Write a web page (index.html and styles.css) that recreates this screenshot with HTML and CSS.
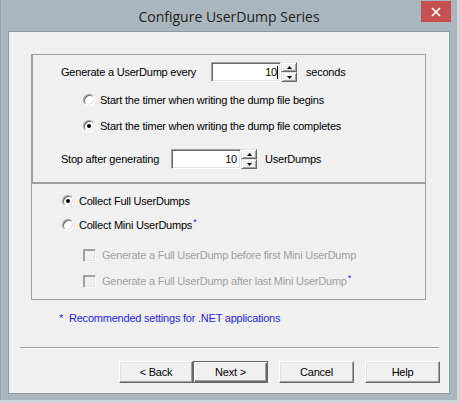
FILE: index.html
```html
<!DOCTYPE html>
<html>
<head>
<meta charset="utf-8">
<title>Configure UserDump Series</title>
<link rel="stylesheet" href="styles.css">
</head>
<body>
<div class="window">
  <div class="titlebar">
    <span class="title">Configure UserDump Series</span>
    <div class="close">
      <svg width="10" height="10" viewBox="0 0 10 10"><path d="M1 1L9 9M9 1L1 9" stroke="#fff" stroke-width="1.7" fill="none"/></svg>
    </div>
  </div>
  <div class="client">
    <div class="group g1">
      <div class="spinrow first">
        <span class="label l-every">Generate a UserDump every</span>
        <div class="spin">
          <div class="field">10<span class="caret"></span></div>
          <div class="arrows">
            <div class="arr"><svg width="5" height="3" viewBox="0 0 5 3"><path d="M2.5 0L5 3H0Z" fill="#000"/></svg></div>
            <div class="arr"><svg width="5" height="3" viewBox="0 0 5 3"><path d="M0 0H5L2.5 3Z" fill="#000"/></svg></div>
          </div>
        </div>
        <span class="unit">seconds</span>
      </div>
      <div class="opt indent r1"><span class="radio"></span><span class="txt">Start the timer when writing the dump file begins</span></div>
      <div class="opt indent r2"><span class="radio on"></span><span class="txt">Start the timer when writing the dump file completes</span></div>
      <div class="spinrow last">
        <span class="label l-stop">Stop after generating</span>
        <div class="spin">
          <div class="field">10</div>
          <div class="arrows">
            <div class="arr"><svg width="5" height="3" viewBox="0 0 5 3"><path d="M2.5 0L5 3H0Z" fill="#000"/></svg></div>
            <div class="arr"><svg width="5" height="3" viewBox="0 0 5 3"><path d="M0 0H5L2.5 3Z" fill="#000"/></svg></div>
          </div>
        </div>
        <span class="unit">UserDumps</span>
      </div>
    </div>
    <div class="group g2">
      <div class="opt outdent c1"><span class="radio on"></span><span class="txt">Collect Full UserDumps</span></div>
      <div class="opt outdent c2"><span class="radio"></span><span class="txt">Collect Mini UserDumps<sup class="star">*</sup></span></div>
      <div class="opt cindent k1"><span class="check"></span><span class="txt dis">Generate a Full UserDump before first Mini UserDump</span></div>
      <div class="opt cindent k2"><span class="check"></span><span class="txt dis">Generate a Full UserDump after last Mini UserDump<sup class="star">*</sup></span></div>
    </div>
    <div class="note"><span class="nstar">*</span><span>Recommended settings for .NET applications</span></div>
    <div class="sep"></div>
    <div class="buttons">
      <button class="btn back">&lt; Back</button>
      <button class="btn next">Next &gt;</button>
      <button class="btn cancel">Cancel</button>
      <button class="btn help">Help</button>
    </div>
  </div>
</div>
</body>
</html>
```
FILE: styles.css
```css
html, body {
  margin: 0;
  padding: 0;
}
body {
  width: 460px;
  height: 403px;
  background: #cfd5d9;
  font-family: "Liberation Sans", Arial, sans-serif;
  font-size: 11px;
  letter-spacing: -0.22px;
  color: #000;
  overflow: hidden;
}
.window {
  width: 457px;
  height: 400px;
  box-sizing: border-box;
  background: #aab6bd;
  border-left: 1px solid #93a0a8;
  display: flex;
  flex-direction: column;
  position: relative;
}
.titlebar {
  height: 31px;
  flex: none;
  display: flex;
  align-items: center;
  justify-content: center;
}
.title {
  font-family: "Open Sans", "Noto Sans", sans-serif;
  font-size: 14px;
  letter-spacing: 0;
  color: #222;
  margin-top: 1px;
}
.close {
  position: absolute;
  left: 420px;
  top: 1px;
  width: 30px;
  height: 21px;
  background: #c75050;
  display: flex;
  align-items: center;
  justify-content: center;
}
.client {
  flex: none;
  margin: 0 7px 0 7px;
  height: 363px;
  box-sizing: border-box;
  border: 1px solid #8d9aa2;
  background: #f0f0f0;
  display: flex;
  flex-direction: column;
}
.group {
  margin-left: 22px;
  width: 395px;
  box-sizing: border-box;
  border: 1px solid #a0a0a0;
  display: flex;
  flex-direction: column;
}
.g1 {
  margin-top: 22px;
  border-left-width: 2px;
  border-bottom-width: 2px;
  padding-bottom: 13px;
}
.g2 {
  border-top: none;
  padding-bottom: 10px;
}
.spinrow {
  height: 20px;
  display: flex;
  align-items: center;
  padding-left: 28px;
}
.spinrow.first { margin-top: 7px; }
.spinrow.last { margin-top: 15px; }
.label { flex: none; }
.l-every { width: 150px; }
.l-stop { width: 110px; }
.spin {
  display: flex;
  height: 20px;
}
.field {
  width: 70px;
  height: 20px;
  box-sizing: border-box;
  background: #fff;
  border: 1px solid;
  border-color: #a0a0a0 #fff #fff #a0a0a0;
  box-shadow: inset 1px 1px 0 #696969, inset -1px -1px 0 #e3e3e3;
  display: flex;
  align-items: center;
  justify-content: flex-end;
  padding-right: 3px;
  position: relative;
}
.caret {
  width: 1px;
  height: 13px;
  background: #000;
  margin-left: 0;
  margin-right: -1px;
}
.arrows {
  width: 16px;
  height: 20px;
  display: flex;
  flex-direction: column;
}
.arr {
  height: 10px;
  box-sizing: border-box;
  background: #f0f0f0;
  border: 1px solid;
  border-color: #e3e3e3 #696969 #696969 #e3e3e3;
  box-shadow: inset 1px 1px 0 #fff, inset -1px -1px 0 #a0a0a0;
  display: flex;
  align-items: center;
  justify-content: center;
}
.arr svg { display: block; }
.unit { margin-left: 9px; }
.spinrow.last .unit { margin-left: 8px; }
.opt {
  height: 16px;
  display: flex;
  align-items: center;
}
.indent { padding-left: 50px; }
.r1 { margin-top: 10px; }
.r2 { margin-top: 10px; }
.outdent { padding-left: 30px; }
.c1 { margin-top: 9px; }
.c2 { margin-top: 8px; }
.cindent { padding-left: 51px; }
.k1 { margin-top: 14px; }
.k2 { margin-top: 10px; }
.radio {
  flex: none;
  width: 12px;
  height: 12px;
  box-sizing: border-box;
  border-radius: 50%;
  background: #fff;
  border: 1px solid;
  border-color: #a0a0a0 #fff #fff #a0a0a0;
  box-shadow: inset 1px 1px 0 #696969, inset -1px -1px 0 #e3e3e3;
  display: flex;
  align-items: center;
  justify-content: center;
  margin-right: 5px;
}
.radio.on::after {
  content: "";
  width: 4px;
  height: 4px;
  border-radius: 50%;
  background: #000;
}
.check {
  flex: none;
  width: 13px;
  height: 13px;
  box-sizing: border-box;
  background: #f0f0f0;
  border: 1px solid;
  border-color: #a0a0a0 #fff #fff #a0a0a0;
  box-shadow: inset 1px 1px 0 #a0a0a0, inset -1px -1px 0 #e3e3e3;
  margin-right: 6px;
}
.dis { color: #a0a0a0; }
.star {
  color: #1f1fd8;
  font-size: 9px;
  vertical-align: 4px;
  line-height: 0;
  margin-left: 1px;
}
.note {
  margin-top: 10px;
  height: 16px;
  display: flex;
  align-items: center;
  padding-left: 50px;
  color: #1f1fd8;
}
.nstar { width: 10px; }
.sep {
  margin-top: 21px;
  margin-left: 11px;
  width: 419px;
  height: 1px;
  border-top: 1px solid #a0a0a0;
  border-bottom: 1px solid #fff;
  box-sizing: content-box;
  height: 0;
}
.buttons {
  margin-top: 12px;
  height: 22px;
  display: flex;
  justify-content: flex-end;
  padding-right: 9px;
}
.btn {
  width: 75px;
  height: 22px;
  margin: 0;
  padding: 0;
  box-sizing: border-box;
  font-family: "Liberation Sans", Arial, sans-serif;
  font-size: 11px;
  letter-spacing: -0.22px;
  color: #000;
  background: #f0f0f0;
  border: 1px solid;
  border-color: #fff #696969 #696969 #fff;
  box-shadow: inset -1px -1px 0 #a0a0a0, inset 1px 1px 0 #e3e3e3;
}
.back { width: 74px; }
.next {
  border: 1px solid #646464;
  box-shadow: inset 1px 1px 0 #fff, inset -1px -1px 0 #696969, inset -2px -2px 0 #a0a0a0;
  margin-right: 11px;
}
.cancel { margin-right: 11px; }
```
